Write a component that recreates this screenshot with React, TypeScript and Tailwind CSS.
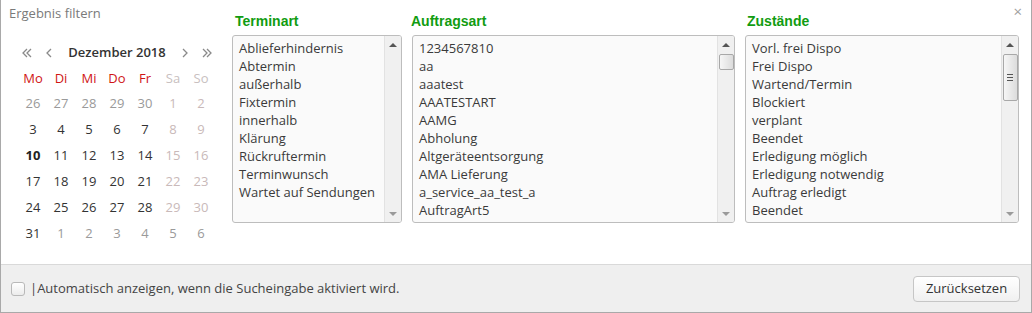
import React from "react";

const terminart = [
  "Ablieferhindernis",
  "Abtermin",
  "außerhalb",
  "Fixtermin",
  "innerhalb",
  "Klärung",
  "Rückruftermin",
  "Terminwunsch",
  "Wartet auf Sendungen",
];
const auftragsart = [
  "1234567810",
  "aa",
  "aaatest",
  "AAATESTART",
  "AAMG",
  "Abholung",
  "Altgeräteentsorgung",
  "AMA Lieferung",
  "a_service_aa_test_a",
  "AuftragArt5",
];
const zustaende = [
  "Vorl. frei Dispo",
  "Frei Dispo",
  "Wartend/Termin",
  "Blockiert",
  "verplant",
  "Beendet",
  "Erledigung möglich",
  "Erledigung notwendig",
  "Auftrag erledigt",
  "Beendet",
];

type Cell = { d: number; kind: "prev" | "cur" | "wk" | "next" | "today" };
const rows: Cell[][] = [
  [26, 27, 28, 29, 30].map((d) => ({ d, kind: "prev" as const })).concat([
    { d: 1, kind: "wk" },
    { d: 2, kind: "wk" },
  ]),
];
{
  let start = 3;
  for (let r = 0; r < 4; r++) {
    const row: Cell[] = [];
    for (let c = 0; c < 7; c++) {
      const d = start + c;
      row.push({ d, kind: c >= 5 ? "wk" : d === 10 ? "today" : "cur" });
    }
    rows.push(row);
    start += 7;
  }
  rows.push([
    { d: 31, kind: "cur" },
    { d: 1, kind: "next" },
    { d: 2, kind: "next" },
    { d: 3, kind: "next" },
    { d: 4, kind: "next" },
    { d: 5, kind: "next" },
    { d: 6, kind: "next" },
  ]);
}

function cellClass(k: Cell["kind"]) {
  switch (k) {
    case "prev":
    case "next":
      return "text-[#9a9a9a]";
    case "wk":
      return "text-[#c9b9b9]";
    case "today":
      return "text-[#222] font-bold";
    default:
      return "text-[#333]";
  }
}

function Chev({ dir, double }: { dir: "l" | "r"; double?: boolean }) {
  const single = dir === "l" ? "M6 1 L2 5 L6 9" : "M2 1 L6 5 L2 9";
  const dbl =
    dir === "l" ? "M6 1 L2 5 L6 9 M10 1 L6 5 L10 9" : "M2 1 L6 5 L2 9 M6 1 L10 5 L6 9";
  return (
    <svg width={double ? 12 : 8} height="10" viewBox={double ? "0 0 12 10" : "0 0 8 10"}>
      <path d={double ? dbl : single} fill="none" stroke="#8a8a8a" strokeWidth="1.3" />
    </svg>
  );
}

function Scrollbar({ thumb }: { thumb?: "small" | "large" }) {
  return (
    <div className="flex w-[17px] shrink-0 flex-col items-center bg-[#f0f0f0] border-l border-[#e2e2e2]">
      <div className="flex h-[16px] w-full items-center justify-center pt-[2px]">
        <div className="h-0 w-0 border-x-[4px] border-b-[4px] border-x-transparent border-b-[#555]" />
      </div>
      {thumb === "small" && (
        <div className="mt-[2px] h-[16px] w-[15px] rounded-[2px] border border-[#a8a8a8] bg-gradient-to-r from-[#f6f6f6] to-[#dcdcdc]" />
      )}
      {thumb === "large" && (
        <div className="mt-[2px] flex h-[47px] w-[15px] flex-col items-center justify-center gap-[2px] rounded-[2px] border border-[#a8a8a8] bg-gradient-to-r from-[#f6f6f6] to-[#dcdcdc]">
          <div className="h-px w-[6px] bg-[#555]" />
          <div className="h-px w-[6px] bg-[#555]" />
          <div className="h-px w-[6px] bg-[#555]" />
        </div>
      )}
      <div className="flex-1" />
      <div className="flex h-[14px] w-full items-center justify-center pb-[2px]">
        <div className="h-0 w-0 border-x-[4px] border-t-[4px] border-x-transparent border-t-[#9a9a9a]" />
      </div>
    </div>
  );
}

function ListCol({
  title,
  items,
  width,
  thumb,
  titleMl,
}: {
  title: string;
  items: string[];
  width: string;
  thumb?: "small" | "large";
  titleMl: string;
}) {
  return (
    <div className={`flex flex-col ${width}`}>
      <div
        className={`h-[20px] ${titleMl} text-[14px] font-bold leading-[18px] text-[#119c11]`}
        style={{ fontFamily: '"Liberation Sans", Arial, sans-serif' }}
      >
        {title}
      </div>
      <div className="mt-[3px] flex h-[188px] overflow-hidden rounded-[3px] border border-[#bdbdbd] bg-[#fafafa]">
        <div className="flex-1 overflow-hidden pl-[6px] pt-[3px]">
          {items.map((t, i) => (
            <div key={i} className="h-[18px] whitespace-nowrap text-[13px] leading-[18px] text-[#3a3a3a]">
              {t}
            </div>
          ))}
        </div>
        <Scrollbar thumb={thumb} />
      </div>
    </div>
  );
}

export default function App() {
  return (
    <div
      className="relative flex h-[313px] w-[1032px] flex-col border-x border-b border-[#a9a9a9] bg-white"
      style={{ fontFamily: '"Open Sans", "Noto Sans", sans-serif' }}
    >
      <div className="absolute right-[9px] top-[2px] text-[15px] leading-[18px] text-[#a0a0a0]">×</div>
      <div className="flex h-[264px] pt-[12px]">
        {/* left */}
        <div className="flex w-[231px] shrink-0 flex-col">
          <div className="pl-[8px] text-[13px] text-[#7a7a7a]" style={{ lineHeight: "2px" }}>
            Ergebnis filtern
          </div>
          <div className="ml-[15px] mt-[26px] w-[202px]">
            <div className="flex h-[26px] items-center text-[13px] text-[#666]">
              <div className="flex w-[22px] justify-center">
                <Chev dir="l" double />
              </div>
              <div className="flex w-[22px] justify-center">
                <Chev dir="l" />
              </div>
              <div className="flex-1 text-center text-[13px] font-semibold text-[#333]">Dezember 2018</div>
              <div className="flex w-[22px] justify-center">
                <Chev dir="r" />
              </div>
              <div className="flex w-[22px] justify-center">
                <Chev dir="r" double />
              </div>
            </div>
            <div className="ml-[3px] w-[196px]">
              <div className="mt-[1px] grid h-[24px] grid-cols-7 items-center text-center text-[13px]">
                {["Mo", "Di", "Mi", "Do", "Fr"].map((d) => (
                  <div key={d} className="text-[#d01515]">
                    {d}
                  </div>
                ))}
                {["Sa", "So"].map((d) => (
                  <div key={d} className="text-[#c8c0c0]">
                    {d}
                  </div>
                ))}
              </div>
              {rows.map((r, i) => (
                <div key={i} className="grid h-[26px] grid-cols-7 items-center text-center text-[13px]">
                  {r.map((c, j) => (
                    <div key={j} className={cellClass(c.kind)}>
                      {c.d}
                    </div>
                  ))}
                </div>
              ))}
            </div>
          </div>
        </div>
        <div className="flex gap-[10px]">
          <ListCol title="Terminart" items={terminart} width="w-[170px]" titleMl="ml-[3px]" />
          <ListCol title="Auftragsart" items={auftragsart} width="w-[323px]" thumb="small" titleMl="ml-[-1px]" />
          <ListCol title="Zustände" items={zustaende} width="w-[274px]" thumb="large" titleMl="ml-[2px]" />
        </div>
      </div>
      <div className="flex flex-1 items-center border-t border-[#d9d9d9] bg-[#efefef] pl-[10px] pr-[11px]">
        <div className="h-[14px] w-[14px] rounded-[3px] border border-[#b9b9b9] bg-gradient-to-b from-white to-[#ececec]" />
        <div className="ml-[5px] text-[13px] text-[#444]">|Automatisch anzeigen, wenn die Sucheingabe aktiviert wird.</div>
        <div className="flex-1" />
        <div className="flex h-[26px] w-[107px] items-center justify-center rounded-[4px] border border-[#c6c6c6] bg-gradient-to-b from-white to-[#f0f0f0] text-[13px] text-[#333]">
          Zurücksetzen
        </div>
      </div>
    </div>
  );
}
